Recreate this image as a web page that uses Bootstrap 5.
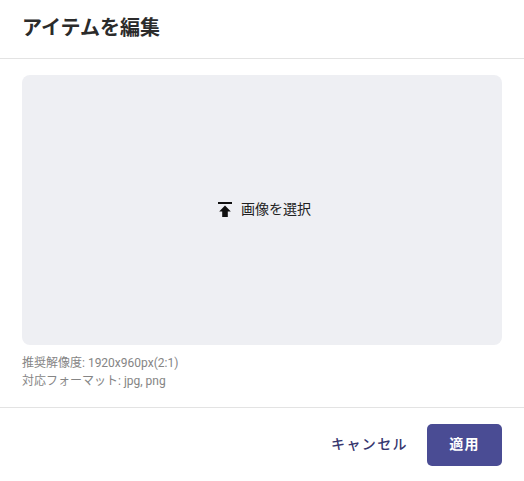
<!DOCTYPE html>
<html lang="ja">
<head>
<meta charset="utf-8">
<title>アイテムを編集</title>
<link rel="stylesheet" href="https://cdn.jsdelivr.net/npm/bootstrap@5.3.0/dist/css/bootstrap.min.css">
<style>
html, body { height: 100%; }
body { font-family: Roboto, "Noto Sans CJK JP", sans-serif; background: #fff; color: #212121; overflow: hidden; }
.dlg-head { height: 59px; padding: 0 22px; border-bottom: 1px solid #e3e3e3; }
.dlg-title { font-size: 20px; font-weight: 700; line-height: 1; color: #2b2b2b; margin: 0; position: relative; top: -1px; }
.dlg-body { padding: 16px 22px 0; height: 348px; }
.pick-area { height: 270px; background: #eeeff3; border-radius: 8px; gap: 9px; font-size: 14px; color: #212121; padding-left: 5px; padding-bottom: 1px; }
.pick-area svg { display: block; }
.hint { margin-top: 8px; padding-top: 1px; font-size: 12px; line-height: 18px; color: #858585; }
.dlg-foot { height: 74px; padding: 0 22px; border-top: 1px solid #e3e3e3; gap: 19px; }
.btn-cancel { font-size: 14px; font-weight: 500; letter-spacing: 1.4px; color: #36366e; padding: 0; border: 0; background: none; }
.btn-apply { width: 75px; height: 42px; padding: 0; border: 0; border-radius: 5px; background: #4a4c94; color: #fff; font-size: 14px; font-weight: 700; letter-spacing: 1.25px; }
.btn-apply:hover { background: #4a4c94; color: #fff; }
</style>
</head>
<body>
<div class="dlg-head d-flex align-items-center">
  <h1 class="dlg-title">アイテムを編集</h1>
</div>
<div class="dlg-body">
  <div class="pick-area d-flex align-items-center justify-content-center">
    <svg width="14" height="16" viewBox="0 0 14 16" aria-hidden="true"><path fill="#111" d="M0 0h14v2H0zM7 3.500l5.800 6H9.800V15H4.200V9.500H1.200z"/></svg>
    <span>画像を選択</span>
  </div>
  <div class="hint">
    <div>推奨解像度: 1920x960px(2:1)</div>
    <div>対応フォーマット: jpg, png</div>
  </div>
</div>
<div class="dlg-foot d-flex align-items-center justify-content-end">
  <button type="button" class="btn btn-cancel">キャンセル</button>
  <button type="button" class="btn btn-apply">適用</button>
</div>
<script src="https://cdn.jsdelivr.net/npm/bootstrap@5.3.0/dist/js/bootstrap.bundle.min.js"></script>
</body>
</html>
